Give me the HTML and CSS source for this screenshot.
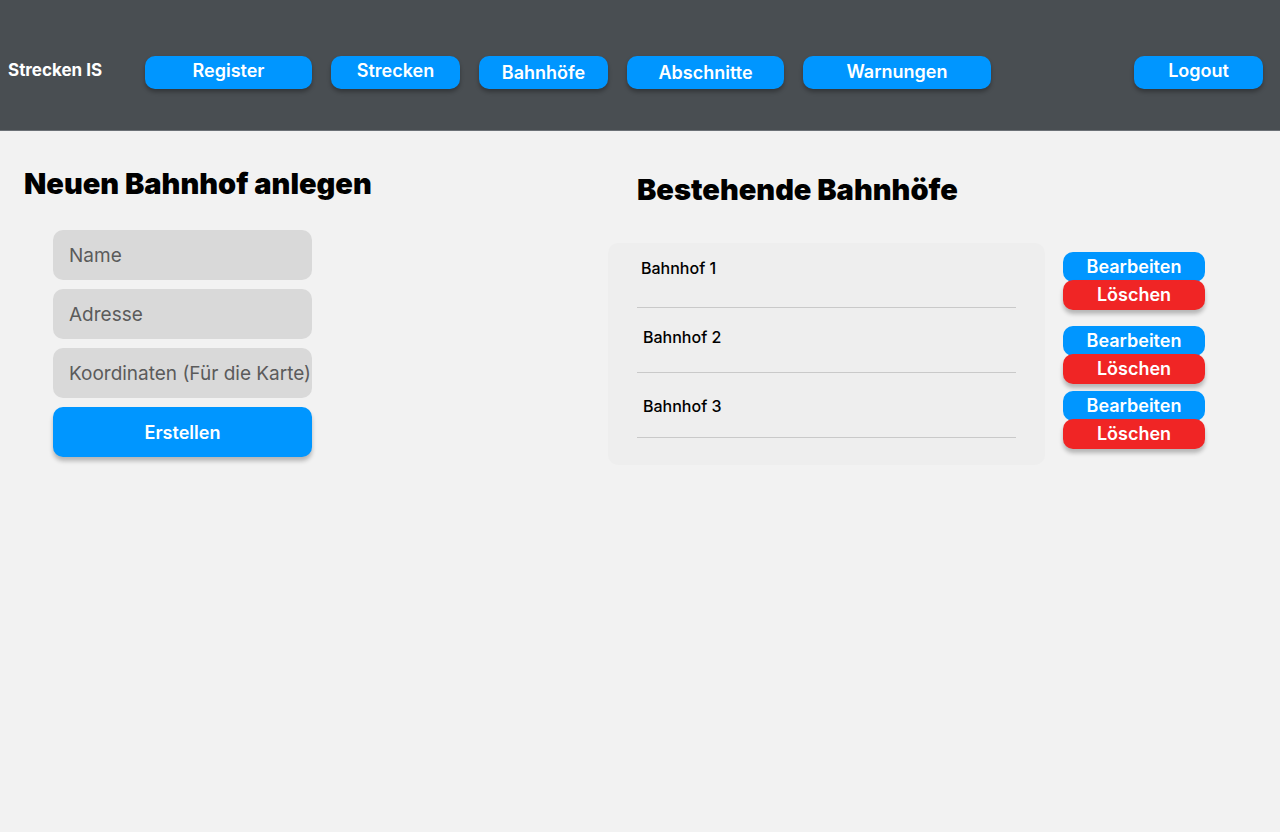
FILE: index.html
```html
<!DOCTYPE html>
<html lang="de">
<head>
<meta charset="utf-8">
<title>Strecken IS – Bahnhöfe</title>
<link rel="stylesheet" href="styles.css">
</head>
<body>
<header class="topbar">
  <div class="brand">Strecken IS</div>
  <nav class="nav">
    <a class="nav-btn nav-register" href="#">Register</a>
    <a class="nav-btn nav-strecken" href="#">Strecken</a>
    <a class="nav-btn nav-bahnhoefe" href="#">Bahnhöfe</a>
    <a class="nav-btn nav-abschnitte" href="#">Abschnitte</a>
    <a class="nav-btn nav-warnungen" href="#">Warnungen</a>
  </nav>
  <a class="nav-btn nav-logout" href="#">Logout</a>
</header>
<main class="content">
  <section class="create">
    <h2 class="heading">Neuen Bahnhof anlegen</h2>
    <form class="form">
      <input class="field" type="text" placeholder="Name">
      <input class="field" type="text" placeholder="Adresse">
      <input class="field" type="text" placeholder="Koordinaten (Für die Karte)">
      <button class="submit" type="button">Erstellen</button>
    </form>
  </section>
  <section class="existing">
    <h2 class="heading heading-right">Bestehende Bahnhöfe</h2>
    <div class="list-row">
      <div class="card">
        <div class="item item-1">Bahnhof 1</div>
        <div class="item item-2">Bahnhof 2</div>
        <div class="item item-3">Bahnhof 3</div>
      </div>
      <div class="actions">
        <div class="pair"><button class="act edit">Bearbeiten</button><button class="act del">Löschen</button></div>
        <div class="pair"><button class="act edit">Bearbeiten</button><button class="act del">Löschen</button></div>
        <div class="pair"><button class="act edit">Bearbeiten</button><button class="act del">Löschen</button></div>
      </div>
    </div>
  </section>
</main>
</body>
</html>
```
FILE: styles.css
```css
* { box-sizing: border-box; }
html, body { margin: 0; padding: 0; }
body {
  background: #f2f2f2;
  font-family: Inter, "Liberation Sans", sans-serif;
  color: #000;
  width: 1280px;
  height: 832px;
  overflow: hidden;
}
.topbar {
  height: 131px;
  background: #494e52;
  border-bottom: 1px solid #6c7176;
  display: flex;
  align-items: flex-start;
  padding: 56px 17px 0 8px;
}
.brand {
  color: #fff;
  font-weight: 700;
  font-size: 17px;
  line-height: 28px;
  width: 137px;
}
.nav {
  display: flex;
  gap: 19px;
  flex: 1;
}
.nav-btn {
  display: flex;
  align-items: center;
  justify-content: center;
  height: 33px;
  background: #0096ff;
  color: #fff;
  border-radius: 10px;
  text-decoration: none;
  font-weight: 600;
  font-size: 18px;
  padding-bottom: 4px;
  box-shadow: 0 3px 4px rgba(0,0,0,0.3);
}
.nav-register { width: 167px; }
.nav-strecken { width: 129px; }
.nav-bahnhoefe { width: 129px; padding-bottom: 0; }
.nav-abschnitte { width: 157px; padding-bottom: 0; }
.nav-warnungen { width: 188px; padding-bottom: 2px; }
.nav-logout { width: 129px; }

.content {
  display: grid;
  grid-template-columns: 608px 1fr;
}
.heading {
  margin: 0;
  font-size: 29px;
  font-weight: 900;
  letter-spacing: 0;
  line-height: 34px;
}
.create { padding: 36px 0 0 24px; }
.form {
  display: flex;
  flex-direction: column;
  gap: 9px;
  width: 259px;
  margin: 29px 0 0 29px;
}
.field {
  height: 50px;
  border: none;
  border-radius: 10px;
  background: #d9d9d9;
  padding: 0 0 0 16px;
  font-family: Inter, "Liberation Sans", sans-serif;
  font-size: 19px;
  color: #333;
  outline: none;
}
.field::placeholder { color: #5b5b5b; opacity: 1; }
.submit {
  height: 50px;
  border: none;
  border-radius: 10px;
  background: #0096ff;
  color: #fff;
  font-family: Inter, "Liberation Sans", sans-serif;
  font-weight: 600;
  font-size: 18px;
  box-shadow: 0 4px 4px rgba(0,0,0,0.25);
}
.existing { padding-top: 42px; }
.heading-right { margin-left: 29px; }
.list-row {
  display: flex;
  align-items: flex-start;
  gap: 18px;
  margin-top: 36px;
}
.card {
  width: 437px;
  height: 222px;
  background: #eeeeee;
  border-radius: 10px;
  padding: 0 29px;
}
.item {
  height: 65px;
  border-bottom: 1px solid #c9c9c9;
  font-size: 16px;
  font-weight: 500;
  line-height: 18px;
}
.item-1 { padding: 16px 0 0 4px; }
.item-2 { padding: 20px 0 0 6px; }
.item-3 { padding: 24px 0 0 6px; }
.actions {
  display: flex;
  flex-direction: column;
  padding-top: 9px;
}
.pair { display: flex; flex-direction: column; }
.pair + .pair { margin-top: 16px; }
.pair:nth-child(3) { margin-top: 7px; }
.act {
  width: 142px;
  height: 30px;
  border: none;
  border-radius: 10px;
  color: #fff;
  font-family: Inter, "Liberation Sans", sans-serif;
  font-weight: 600;
  font-size: 18px;
  padding: 0 0 2px;
}
.edit { background: #0096ff; }
.del {
  background: #f02525;
  margin-top: -2px;
  box-shadow: 0 4px 4px rgba(0,0,0,0.25);
}
```
